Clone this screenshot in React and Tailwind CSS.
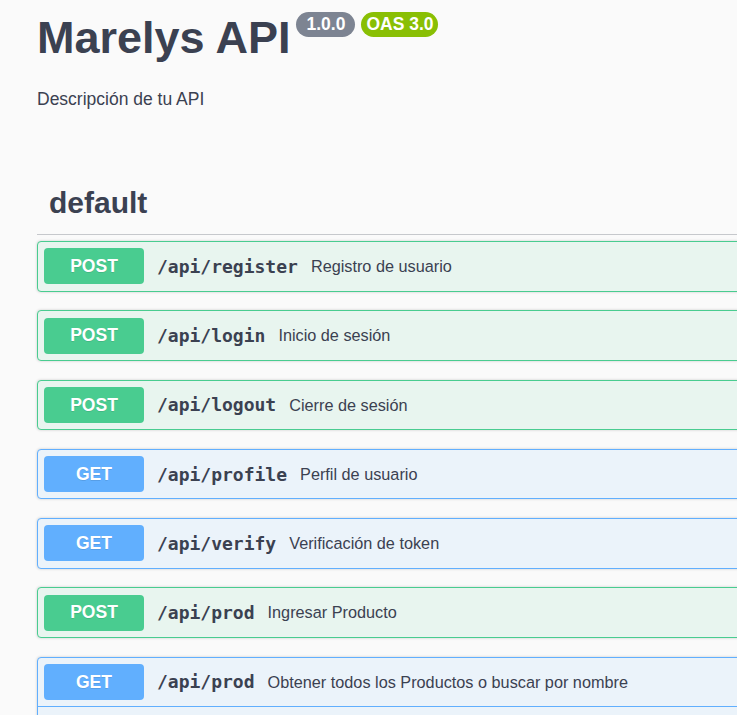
import React from "react";

const ops = [
  { m: "POST", p: "/api/register", d: "Registro de usuario" },
  { m: "POST", p: "/api/login", d: "Inicio de sesión" },
  { m: "POST", p: "/api/logout", d: "Cierre de sesión" },
  { m: "GET", p: "/api/profile", d: "Perfil de usuario" },
  { m: "GET", p: "/api/verify", d: "Verificación de token" },
  { m: "POST", p: "/api/prod", d: "Ingresar Producto" },
  { m: "GET", p: "/api/prod", d: "Obtener todos los Productos o buscar por nombre", open: true },
];

function Summary({ op }) {
  const post = op.m === "POST";
  return (
    <div className="flex items-center h-[48.5px] px-[6px]">
      <span
        className={
          "w-[100px] h-[36px] shrink-0 rounded-[4px] flex items-center justify-center text-white font-bold text-[17.5px] [text-shadow:0_1px_0_rgba(0,0,0,0.1)] " +
          (post ? "bg-[#49cc90]" : "bg-[#61affe]")
        }
      >
        {op.m}
      </span>
      <span className="pl-[13px] pr-[13px] font-['DejaVu_Sans_Mono',monospace] font-bold text-[18px] text-[#3b4151] whitespace-nowrap">
        {op.p}
      </span>
      <span className="text-[16.25px] text-[#3b4151] whitespace-nowrap">{op.d}</span>
    </div>
  );
}

function Block({ op }) {
  const post = op.m === "POST";
  const base = post
    ? "border-[#49cc90] bg-[#e8f5ef]"
    : "border-[#61affe] bg-[#ebf3fa]";
  if (op.open) {
    return (
      <div className={"border rounded-[4px] shadow-[0_0_3px_rgba(0,0,0,0.19)] mb-[18.75px] " + base}>
        <div className="border-b border-[#61affe]">
          <Summary op={op} />
        </div>
        <div className="h-[200px]"></div>
      </div>
    );
  }
  return (
    <div className={"border rounded-[4px] shadow-[0_0_3px_rgba(0,0,0,0.19)] mb-[18.75px] h-[50.5px] " + base}>
      <Summary op={op} />
    </div>
  );
}

export default function App() {
  return (
    <div className="w-[737px] h-[715px] overflow-hidden bg-[#fafafa] font-['Liberation_Sans',Arial,sans-serif] text-[#3b4151]">
      <div className="w-[1200px] pl-[37px]">
        <div className="flex items-start pt-[12px]">
          <h1 className="mt-[3px] text-[45px] leading-[45px] font-bold text-[#3b4151]">Marelys API</h1>
          <span className="ml-[6px] w-[59px] text-center h-[25px] leading-[25px] rounded-full bg-[#7d8492] text-white font-bold text-[17.5px]">
            1.0.0
          </span>
          <span className="ml-[6px] w-[77px] text-center h-[25px] leading-[25px] rounded-full bg-[#89bf04] text-white font-bold text-[17.5px]">
            OAS 3.0
          </span>
        </div>
        <div className="mt-[29px] h-[20px] leading-[20px] text-[17.5px] text-[#3b4151]">Descripción de tu API</div>
        <div className="mt-[66px] pt-[13px] pb-[16px] pl-[12px] border-b border-[#c6c8cc]">
          <h3 className="text-[30px] leading-[30px] font-bold text-[#3b4151]">default</h3>
        </div>
        <div className="mt-[6px]">
          {ops.map((op, i) => (
            <Block key={i} op={op} />
          ))}
        </div>
      </div>
    </div>
  );
}
